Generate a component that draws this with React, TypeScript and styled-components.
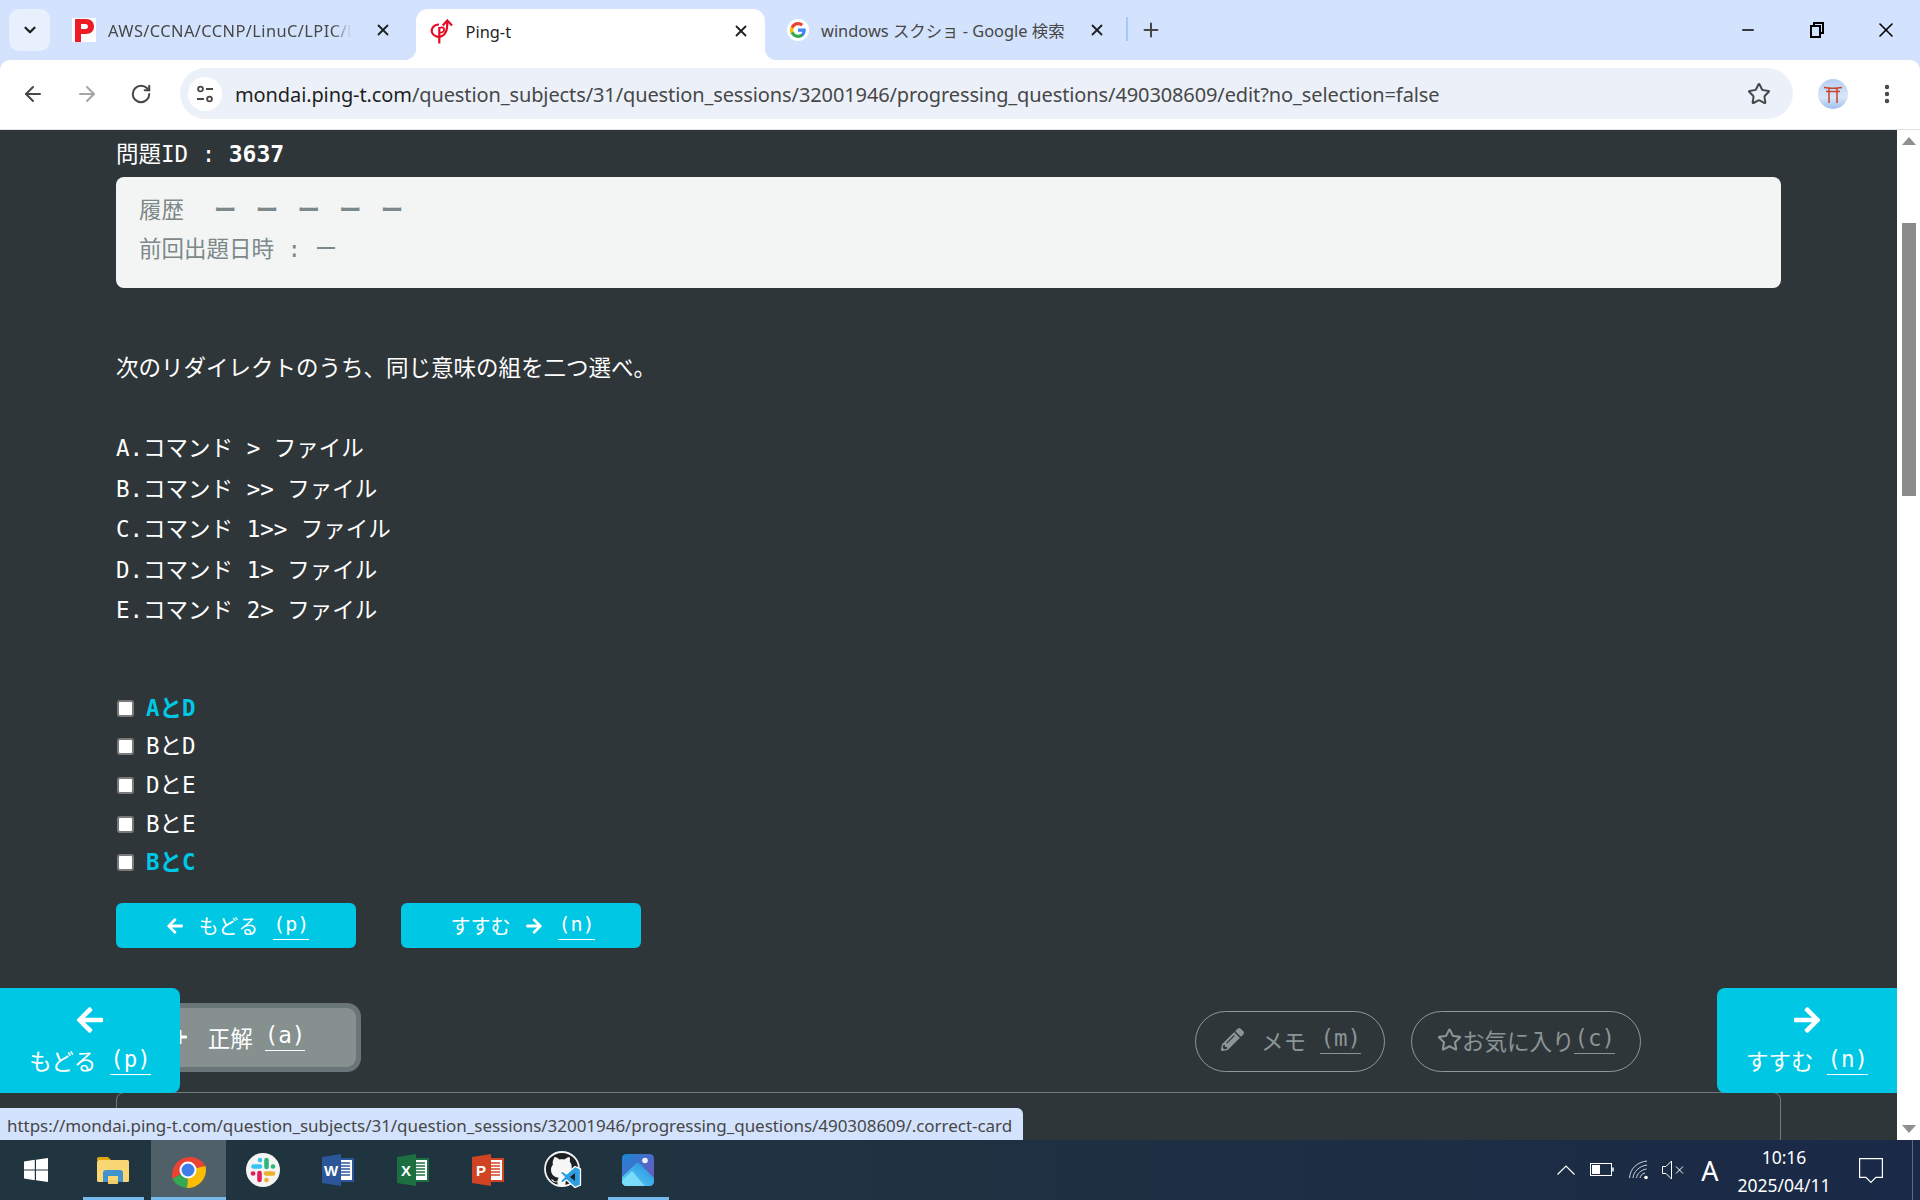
import React from "react";
import styled, { createGlobalStyle } from "styled-components";
import { ArrowLeft, ArrowRight, RotateCw, Star, EllipsisVertical, X, Plus, ChevronDown, Minus } from "lucide-react";
import { FaArrowLeft, FaArrowRight, FaPencilAlt, FaRegStar, FaPlus } from "react-icons/fa";

const CODE = `"DejaVu Sans Mono", "Noto Sans CJK JP", monospace`;
const UI = `"Noto Sans", "Noto Sans CJK JP", sans-serif`;
const CYAN = "#00c7e3";
const BG = "#2f3639";

const Global = createGlobalStyle`
  html, body { margin: 0; padding: 0; width: 100%; height: 100%; overflow: hidden; background: ${BG}; }
  * { box-sizing: border-box; }
`;

const Screen = styled.div`
  width: 1920px; height: 1200px; display: flex; flex-direction: column; overflow: hidden;
  font-family: ${UI};
`;

/* ---------- tab strip ---------- */
const TabStrip = styled.div`
  height: 60px; flex: none; background: #d3e3fd; display: flex; align-items: flex-end; padding-left: 9px; gap: 8px;
`;
const TabSearch = styled.div`
  width: 41px; height: 42px; margin-bottom: 9px; border-radius: 10px; background: #e9f0fd;
  display: flex; align-items: center; justify-content: center; color: #1f1f1f;
`;
const Tab = styled.div<{ $active?: boolean; $end: number }>`
  width: 349.5px; height: 51px; position: relative; display: flex; align-items: center; gap: 12px;
  padding: 0 ${(p) => p.$end}px 9px 14px; border-radius: 12px 12px 0 0; color: ${(p) => (p.$active ? "#1f1f1f" : "#474747")};
  background: ${(p) => (p.$active ? "#fff" : "transparent")};
  ${(p) =>
    p.$active &&
    `padding-bottom: 7px;
    &::before, &::after { content: ""; position: absolute; bottom: 0; width: 12px; height: 12px; }
    &::before { left: -12px; background: radial-gradient(circle at 0 0, transparent 12px, #fff 12.5px); }
    &::after { right: -12px; background: radial-gradient(circle at 100% 0, transparent 12px, #fff 12.5px); }`}
`;
const TabTitle = styled.span<{ $fade?: boolean }>`
  flex: 1; min-width: 0; font-size: 16.4px; white-space: nowrap;
  ${(p) => p.$fade && `letter-spacing: 0.42px; -webkit-mask-image: linear-gradient(90deg, #000 88%, transparent 96%); mask-image: linear-gradient(90deg, #000 88%, transparent 96%);`}
`;
const TabClose = styled.span`
  width: 18px; height: 18px; flex: none; display: flex; align-items: center; justify-content: center; color: #1f1f1f;
`;
const TabSeparator = styled.div`
  width: 2px; height: 24px; background: #a8c7fa; margin: 0 0 19px -5px; flex: none;
`;
const NewTab = styled.div`
  width: 24px; height: 24px; margin: 0 0 18px 3px; display: flex; align-items: center; justify-content: center; color: #444746;
`;
const WindowControls = styled.div`
  margin-left: auto; display: flex; align-self: stretch;
`;
const WindowButton = styled.div`
  width: 69px; height: 60px; display: flex; align-items: center; justify-content: center; color: #000;
`;

/* ---------- toolbar ---------- */
const Toolbar = styled.div`
  height: 70px; flex: none; position: relative; background: #d3e3fd;
`;
const ToolbarInner = styled.div`
  height: 100%; background: #fff; border-radius: 10px 10px 0 0; border-bottom: 1px solid #dfe1e4;
  display: flex; align-items: center; padding: 0 0 2px 15px;
`;
const NavButton = styled.div<{ $dim?: boolean }>`
  width: 36px; height: 36px; margin-right: 18px; display: flex; align-items: center; justify-content: center;
  color: ${(p) => (p.$dim ? "#a3a5a8" : "#474747")};
`;
const Omnibox = styled.div`
  width: 1613px; height: 51px; margin-left: 3px; background: #ecf1f9; border-radius: 26px; display: flex; align-items: center; padding: 0 22px 0 8px;
`;
const SiteInfo = styled.div`
  width: 34px; height: 34px; border-radius: 50%; background: #fff; display: flex; align-items: center; justify-content: center; flex: none;
`;
const Url = styled.div`
  margin-left: 13px; padding-top: 1px; flex: 1; font-size: 20px; letter-spacing: -0.11px; color: #474747; white-space: nowrap;
`;
const UrlHost = styled.span`
  color: #1f1f1f;
`;
const OmniStar = styled.div`
  width: 24px; height: 24px; display: flex; align-items: center; justify-content: center; color: #474747;
`;
const Avatar = styled.div`
  width: 30px; height: 30px; margin-left: 25px; border-radius: 50%; background: linear-gradient(#b6cff2, #d9e6f8 60%, #9dbdec);
  display: flex; align-items: center; justify-content: center; flex: none;
`;
const Menu = styled.div`
  width: 24px; height: 24px; margin-left: 27px; color: #474747; display: flex; align-items: center; justify-content: center;
`;

/* ---------- page ---------- */
const Middle = styled.div`
  flex: 1; min-height: 0; display: flex;
`;
const Page = styled.main`
  flex: 1; min-width: 0; position: relative; overflow: hidden; background: ${BG};
  padding: 0 116px 0 116px; font-family: ${CODE}; font-size: 22.5px; color: #fff;
`;
const QuestionId = styled.div`
  height: 46px; line-height: 48px; margin-bottom: 1px; white-space: pre;
`;
const Strong = styled.strong`
  font-size: 23px; font-weight: 700;
`;
const History = styled.section`
  height: 111px; background: #f3f5f5; border-radius: 8px; padding: 13.5px 23px 0; color: #7c8889;
`;
const HistoryLine = styled.div`
  line-height: 39px; white-space: pre;
`;
const HistoryDashes = styled.span`
  margin-left: 30px; letter-spacing: 19.2px; font-weight: 700;
`;
const QuestionText = styled.p`
  margin: 60px 0 40px; line-height: 40px;
`;
const Options = styled.div`
  margin-bottom: 57px;
`;
const OptionLine = styled.div`
  line-height: 40.5px; white-space: pre;
`;
const Choices = styled.div`
  display: flex; flex-direction: column;
`;
const ChoiceRow = styled.label<{ $hit?: boolean }>`
  height: 38.6px; padding-bottom: 2px; display: flex; align-items: center; gap: 12px; white-space: pre;
  color: ${(p) => (p.$hit ? CYAN : "#fff")}; font-weight: ${(p) => (p.$hit ? 700 : 400)};
`;
const Check = styled.input`
  appearance: none; width: 17px; height: 17px; margin: 5px 0 0 1px; flex: none; background: #fff; border: 2px solid #7a7a7a; border-radius: 3px;
`;
const InlineButtons = styled.div`
  display: flex; gap: 45px; margin-top: 23px;
`;
const CyanButton = styled.button`
  width: 240px; height: 45px; padding: 0 0 0 3px; border: 0; border-radius: 6px; background: ${CYAN}; color: #fff;
  font: 400 20px ${CODE}; display: flex; align-items: center; justify-content: center; gap: 15px;
`;
const Key = styled.span<{ $pull?: number }>`
  border-bottom: 1px solid currentColor; line-height: 27px; padding: 0 0 1px; white-space: pre;
  margin-left: ${(p) => p.$pull ?? 0}px;
`;
const ActionRow = styled.div`
  display: flex; align-items: flex-end; margin-top: 54px; height: 70px;
`;
const AnswerButton = styled.button`
  width: 245px; height: 69px; padding: 0 0 2px; border: 5px solid #6a7577; border-radius: 14px; background: #85908f; color: #fff;
  font: 400 22.5px ${CODE}; display: flex; align-items: center; justify-content: center; gap: 20px;
`;
const PillGroup = styled.div`
  margin-left: auto; margin-right: 140px; display: flex; gap: 26px;
`;
const Pill = styled.button<{ $w: number; $gap: number; $lead?: number }>`
  width: ${(p) => p.$w}px; height: 61px; padding: 0 0 4px ${(p) => p.$lead ?? 0}px; border: 1px solid #8e9899; border-radius: 31px; background: transparent;
  color: #8a9596; font: 400 22.5px ${CODE}; display: flex; align-items: center; justify-content: center; gap: ${(p) => p.$gap}px;
`;
const ExplainCard = styled.section`
  margin-top: 20px; height: 100px; border: 1px solid #73797b; border-radius: 8px;
`;
const FloatButton = styled.button<{ $side: "left" | "right" }>`
  position: absolute; bottom: 47px; ${(p) => p.$side}: 0; width: 180px; height: 105px; padding: 0; border: 0; background: ${CYAN}; color: #fff;
  border-radius: ${(p) => (p.$side === "left" ? "0 8px 8px 0" : "8px 0 0 8px")};
  font: 400 22.5px ${CODE}; display: flex; flex-direction: column; align-items: center; gap: 9px; padding-top: 17px;
`;
const FloatLabel = styled.span`
  display: flex; align-items: center; gap: 14px;
`;
const StatusBubble = styled.div`
  position: absolute; left: 0; bottom: 0; width: 1023px; height: 32px; background: #d3e3fd; border-radius: 0 6px 0 0;
  padding-left: 7px; font: 400 17px/36px ${UI}; letter-spacing: -0.04px; color: #474747; white-space: nowrap; overflow: hidden;
`;
const Scrollbar = styled.div`
  width: 23px; flex: none; background: #fff; display: flex; flex-direction: column; align-items: center; position: relative; padding-left: 1px;
`;
const ScrollArrow = styled.div<{ $down?: boolean }>`
  width: 0; height: 0; border-left: 7.5px solid transparent; border-right: 7.5px solid transparent; margin: ${(p) => (p.$down ? "auto 0 7px" : "7px 0 0")};
  ${(p) => (p.$down ? "border-top: 8px solid #8f8f8f;" : "border-bottom: 8px solid #8f8f8f;")}
`;
const ScrollThumb = styled.div`
  position: absolute; top: 93px; left: 5px; width: 14px; height: 273px; background: #8b8b8b;
`;

/* ---------- taskbar ---------- */
const Taskbar = styled.footer`
  height: 60px; flex: none; display: flex; align-items: center; background: linear-gradient(90deg, #20353f, #1f3340 40%, #1a2947);
  color: #fff; position: relative;
`;
const TaskStart = styled.div`
  width: 75.5px; height: 100%; display: flex; align-items: center; justify-content: center; padding-right: 3px;
`;
const TaskCell = styled.div<{ $open?: boolean; $active?: boolean }>`
  width: 75px; height: 100%; position: relative; display: flex; align-items: center; justify-content: center;
  background: ${(p) => (p.$active ? "#4f6068" : "transparent")};
  ${(p) =>
    p.$open &&
    `&::after { content: ""; position: absolute; bottom: 0; left: ${p.$active ? 0 : 7}px; right: ${p.$active ? 0 : 7}px; height: 3px; background: #76b9ed; }`}
`;
const Tray = styled.div`
  margin-left: auto; height: 100%; display: flex; align-items: center;
`;
const TrayIcon = styled.div<{ $w: number; $ml: number }>`
  width: ${(p) => p.$w}px; margin-left: ${(p) => p.$ml}px; display: flex; align-items: center; justify-content: center; flex: none;
`;
const ImeLetter = styled.div`
  width: 20px; margin-left: 16px; font: 400 27px/1 ${UI}; text-align: center;
`;
const Clock = styled.div`
  width: 100px; margin-left: 14px; text-align: center; font: 400 17.5px/28px ${UI}; padding-top: 1px;
`;
const Notify = styled.div`
  margin: 2px 37px 0 25px; width: 24px; display: flex;
`;
const DesktopEdge = styled.div`
  position: absolute; right: 7px; top: 0; bottom: 0; width: 1px; background: #5d6a80;
`;

/* ---------- drawings ---------- */
const PFavicon = () => (
  <svg width="24" height="24" viewBox="0 0 24 24">
    <rect width="24" height="24" fill="#fff" />
    <path d="M3 1h11c5 0 8 3 8 7.500S19 16 14 16H9v8H3z M9 6v5h4.500c1.600 0 2.500-1 2.500-2.500S15 6 13.500 6z" fill="#ee1c25" fillRule="evenodd" />
  </svg>
);
const PingFavicon = () => (
  <svg width="24" height="25" viewBox="0 0 24 25" fill="none" stroke="#e60b24" strokeWidth="2.2">
    <path d="M9 5.500C3.500 5.500 1 10 2 13.500c1 3.500 6 5.500 10 3.500 4-2 5.700-5.500 5.200-14" />
    <path d="M9.300 8v16.500" />
    <path d="M9.300 9c3-1.500 5.200-.3 4.800 2s-2.800 3-4.800 2.500" strokeWidth="1.800" />
    <path d="M12.800 6.500L17.300 1.500 22 6.500" />
  </svg>
);
const GFavicon = () => (
  <svg width="22" height="22" viewBox="0 0 24 24">
    <circle cx="12" cy="12" r="12" fill="#fff" />
    <g transform="translate(2.400 2.400) scale(.8)">
      <path fill="#4285f4" d="M22.560 12.250c0-.78-.07-1.530-.2-2.250H12v4.260h5.920c-.26 1.370-1.040 2.530-2.210 3.310v2.770h3.570c2.080-1.920 3.280-4.740 3.280-8.090z" />
      <path fill="#34a853" d="M12 23c2.970 0 5.460-.98 7.280-2.660l-3.570-2.770c-.98.66-2.230 1.060-3.710 1.060-2.860 0-5.290-1.930-6.160-4.530H2.180v2.840C3.990 20.530 7.700 23 12 23z" />
      <path fill="#fbbc05" d="M5.840 14.090c-.22-.66-.35-1.360-.35-2.090s.13-1.430.35-2.090V7.070H2.180C1.430 8.550 1 10.220 1 12s.43 3.450 1.180 4.930l2.850-2.220.81-.62z" />
      <path fill="#ea4335" d="M12 5.380c1.620 0 3.060.56 4.210 1.640l3.150-3.150C17.450 2.090 14.970 1 12 1 7.700 1 3.990 3.470 2.180 7.070l3.660 2.840c.87-2.600 3.300-4.530 6.160-4.530z" />
    </g>
  </svg>
);
const RestoreIcon = () => (
  <svg width="16" height="16" viewBox="0 0 16 16" fill="none" stroke="#000" strokeWidth="2">
    <rect x="2" y="4" width="9" height="11" />
    <path d="M5 4V1h9v10h-3" />
  </svg>
);
const TuneIcon = () => (
  <svg width="20" height="20" viewBox="0 0 20 20" fill="none" stroke="#474747" strokeWidth="1.800">
    <circle cx="5.500" cy="5" r="2.400" />
    <path d="M11 5h7M2 15h7" />
    <circle cx="14.500" cy="15" r="2.400" />
  </svg>
);
const Torii = () => (
  <svg width="20" height="20" viewBox="0 0 20 20" fill="none" stroke="#c8442c" strokeWidth="1.500">
    <path d="M1 3.500c6 1 12 1 18 0M3 7.500h14M6 3.500V19M14 3.500V19" />
  </svg>
);
const WindowsLogo = () => (
  <svg width="24" height="24" viewBox="0 0 24 24" fill="#fff">
    <path d="M0 3.400 10.800 1.800v9.600H0zM12 1.700 24 0v11.400H12zM0 12.600h10.800v9.600L0 20.600zM12 12.600h12V24l-12-1.700z" />
  </svg>
);
const ExplorerIcon = () => (
  <svg width="32" height="27" viewBox="0 0 32 27">
    <path d="M0 2a2 2 0 0 1 2-2h9l3 3H0z" fill="#e0a50f" />
    <rect y="3" width="32" height="22" rx="1.500" fill="#f9d775" />
    <path d="M6 25v-9a3 3 0 0 1 3-3h14a3 3 0 0 1 3 3v9h-5v-6H11v6z" fill="#3f94d0" />
    <rect x="11" y="23" width="10" height="4" fill="#f0cc6a" />
  </svg>
);
const ChromeIcon = () => (
  <svg width="36" height="36" viewBox="0 0 36 36">
    <path d="M18 18L2.400 27A18 18 0 0 1 35.500 14z" fill="#ea4335" />
    <path d="M18 18L35.500 14A18 18 0 0 1 17 36z" fill="#fbbc04" />
    <path d="M18 18L17 36A18 18 0 0 1 2.400 27z" fill="#34a853" />
    <circle cx="18" cy="18" r="8.500" fill="#fff" />
    <circle cx="18" cy="18" r="6.500" fill="#3f7ee8" />
  </svg>
);
const SlackIcon = () => (
  <svg width="34" height="34" viewBox="0 0 34 34">
    <circle cx="17" cy="17" r="17" fill="#f4f4f4" />
    <g strokeWidth="4.600" strokeLinecap="round">
      <path d="M7.500 13.500h6.500M14 7v.1" stroke="#36c5f0" />
      <path d="M20.500 7v7M27 13.500h.1" stroke="#2eb67d" />
      <path d="M27 20.500h-7M20.500 27v.1" stroke="#ecb22e" />
      <path d="M13.500 27v-7M7 20.500h.1" stroke="#e01e5a" />
    </g>
  </svg>
);
const OfficeIcon = ({ letter, dark, page }: { letter: string; dark: string; page: string }) => (
  <svg width="32" height="32" viewBox="0 0 32 32">
    <rect x="15" y="4" width="17" height="24" fill={page} />
    <rect x="17" y="6" width="13" height="20" fill="#fff" />
    <path d="M18 9h10M18 12h10M18 15h10M18 18h10M18 21h10" stroke={page} strokeWidth="1.500" />
    <path d="M0 3L19 0v32L0 29z" fill={dark} />
    <text x="9" y="22" textAnchor="middle" fontFamily="Liberation Sans" fontWeight="700" fontSize="15" fill="#fff">{letter}</text>
  </svg>
);
const GithubVs = () => (
  <svg width="38" height="38" viewBox="0 0 38 38">
    <circle cx="18" cy="18" r="17" fill="#1a2024" stroke="#f4f4f4" strokeWidth="1.800" />
    <path d="M10.500 6c2 0 4 1.500 5 2.500 1.600-.3 3.400-.3 5 0 1-1 3-2.500 5-2.500.6 1.500.7 3 .2 4.500 1.300 1.500 2 3.300 2 5.300 0 5-3 7.500-7.500 8 .8.7 1.300 2 1.300 3.500v7.200h-8V31c-3 .6-5 0-6.500-3 .9.1 2 .6 3 2 1 .6 2.300.8 3.500.3.100-1.500.5-2.800 1.300-3.500-4.500-.5-7.800-3-7.800-8 0-2 .7-3.800 2-5.300-.5-1.500-.4-3 .2-4.500z" fill="#f7f7f7" />
    <path d="M31 15.500l-8.500 7.500-4-3-2.500 1.800 4.200 4.200-4.200 4.200 2.500 1.800 4-3 8.500 7.500 5.500-2.500V18z" fill="#2f9fe4" stroke="#fff" strokeWidth="1.300" />
    <path d="M31 22l-5 4 5 4z" fill="#1a2024" />
  </svg>
);
const PhotosIcon = () => (
  <svg width="32" height="32" viewBox="0 0 32 32">
    <defs>
      <linearGradient id="ph" x1="0" y1="0" x2="1" y2="1"><stop offset="0" stopColor="#1a87d8" /><stop offset="1" stopColor="#7c4fb8" /></linearGradient>
      <linearGradient id="mt" x1="0" y1="1" x2="1" y2="0"><stop offset="0" stopColor="#62d2f7" /><stop offset="1" stopColor="#1f8fdc" /></linearGradient>
    </defs>
    <rect width="32" height="32" rx="4.500" fill="url(#ph)" />
    <circle cx="23" cy="6.500" r="2.800" fill="#f4eef6" />
    <path d="M0 23L14 9.500c1.300-1 2.300-1 3.500 0L32 24v3.500a4.500 4.500 0 0 1-4.500 4.500h-23A4.500 4.500 0 0 1 0 27.500z" fill="url(#mt)" />
    <path d="M0 27L10 17l13 15H4.500A4.500 4.500 0 0 1 0 27.500z" fill="#7adcfa" />
  </svg>
);
const TrayChevron = () => (
  <svg width="18" height="10" viewBox="0 0 18 10" fill="none" stroke="#fff" strokeWidth="1.200">
    <path d="M.500 9.500L9 1l8.500 8.500" />
  </svg>
);
const BatteryIcon = () => (
  <svg width="24" height="14" viewBox="0 0 24 14" fill="none" stroke="#fff" strokeWidth="1">
    <rect x=".5" y=".5" width="21" height="12" />
    <rect x="2" y="2" width="8" height="9" fill="#fff" stroke="none" />
    <path d="M23 4.500v4" strokeWidth="1.500" />
  </svg>
);
const WifiIcon = () => (
  <svg width="20" height="20" viewBox="0 0 20 20" fill="none" stroke="#cfd3da" strokeWidth="1">
    <path d="M.500 18C1 9 8 2 18 1M4 18c.5-6 6-12 14-13M7.500 18c.5-4 4-8 10-9M11 18c.3-2 2-4.500 5-5" />
    <circle cx="17" cy="17.500" r="1.800" fill="#fff" stroke="none" />
  </svg>
);
const SpeakerIcon = () => (
  <svg width="22" height="20" viewBox="0 0 22 20" fill="none" stroke="#fff" strokeWidth="1">
    <path d="M.500 6.500h3.500L9.500 1v18L4 13.500H.500z" />
    <path d="M14 6.500l7 7M21 6.500l-7 7" />
  </svg>
);
const NotifyIcon = () => (
  <svg width="24" height="26" viewBox="0 0 24 26" fill="none" stroke="#fff" strokeWidth="1.200">
    <path d="M.600.600h22.800v18.800h-6.500l-5 5-5-5H.600z" />
  </svg>
);

const options = ["A.コマンド > ファイル", "B.コマンド >> ファイル", "C.コマンド 1>> ファイル", "D.コマンド 1> ファイル", "E.コマンド 2> ファイル"];
const choices = [
  { t: "AとD", hit: true },
  { t: "BとD" },
  { t: "DとE" },
  { t: "BとE" },
  { t: "BとC", hit: true },
];
const noop = () => undefined;

export default function App() {
  return (
    <Screen>
      <Global />
      <TabStrip>
        <TabSearch><ChevronDown size={18} strokeWidth={3} /></TabSearch>
        <Tab $end={16}>
          <PFavicon />
          <TabTitle $fade>AWS/CCNA/CCNP/LinuC/LPIC/L</TabTitle>
          <TabClose><X size={18} strokeWidth={2.4} /></TabClose>
        </Tab>
        <Tab $active $end={15}>
          <PingFavicon />
          <TabTitle>Ping-t</TabTitle>
          <TabClose><X size={18} strokeWidth={2.4} /></TabClose>
        </Tab>
        <Tab $end={17}>
          <GFavicon />
          <TabTitle>windows スクショ - Google 検索</TabTitle>
          <TabClose><X size={18} strokeWidth={2.4} /></TabClose>
        </Tab>
        <TabSeparator />
        <NewTab><Plus size={22} strokeWidth={2.2} /></NewTab>
        <WindowControls>
          <WindowButton><Minus size={18} strokeWidth={2} /></WindowButton>
          <WindowButton><RestoreIcon /></WindowButton>
          <WindowButton><X size={24} strokeWidth={1.6} /></WindowButton>
        </WindowControls>
      </TabStrip>
      <Toolbar>
        <ToolbarInner>
          <NavButton><ArrowLeft size={24} strokeWidth={2} /></NavButton>
          <NavButton $dim><ArrowRight size={24} strokeWidth={2} /></NavButton>
          <NavButton><RotateCw size={22} strokeWidth={2.2} /></NavButton>
          <Omnibox>
            <SiteInfo><TuneIcon /></SiteInfo>
            <Url><UrlHost>mondai.ping-t.com</UrlHost>/question_subjects/31/question_sessions/32001946/progressing_questions/490308609/edit?no_selection=false</Url>
            <OmniStar><Star size={24} strokeWidth={2} /></OmniStar>
          </Omnibox>
          <Avatar><Torii /></Avatar>
          <Menu><EllipsisVertical size={24} strokeWidth={2.4} /></Menu>
        </ToolbarInner>
      </Toolbar>
      <Middle>
        <Page>
          <QuestionId>問題ID : <Strong>3637</Strong></QuestionId>
          <History>
            <HistoryLine>履歴<HistoryDashes>ーーーーー</HistoryDashes></HistoryLine>
            <HistoryLine>前回出題日時 : ー</HistoryLine>
          </History>
          <QuestionText>次のリダイレクトのうち、同じ意味の組を二つ選べ。</QuestionText>
          <Options>
            {options.map((o) => <OptionLine key={o}>{o}</OptionLine>)}
          </Options>
          <Choices>
            {choices.map((c) => (
              <ChoiceRow key={c.t} $hit={c.hit}><Check type="checkbox" checked={false} onChange={noop} />{c.t}</ChoiceRow>
            ))}
          </Choices>
          <InlineButtons>
            <CyanButton><FaArrowLeft size={18} />もどる <Key>(p)</Key></CyanButton>
            <CyanButton>すすむ <FaArrowRight size={18} /><Key>(n)</Key></CyanButton>
          </InlineButtons>
          <ActionRow>
            <AnswerButton><FaPlus size={16} />正解 <Key $pull={-8}>(a)</Key></AnswerButton>
            <PillGroup>
              <Pill $w={190} $gap={17} $lead={2}><FaPencilAlt size={23} />メモ <Key $pull={-2.5}>(m)</Key></Pill>
              <Pill $w={230} $gap={0}><FaRegStar size={25} />お気に入り<Key>(c)</Key></Pill>
            </PillGroup>
          </ActionRow>
          <ExplainCard />
          <FloatButton $side="left">
            <FaArrowLeft size={30} />
            <FloatLabel>もどる <Key>(p)</Key></FloatLabel>
          </FloatButton>
          <FloatButton $side="right">
            <FaArrowRight size={30} />
            <FloatLabel>すすむ <Key>(n)</Key></FloatLabel>
          </FloatButton>
          <StatusBubble>https://mondai.ping-t.com/question_subjects/31/question_sessions/32001946/progressing_questions/490308609/.correct-card</StatusBubble>
        </Page>
        <Scrollbar>
          <ScrollArrow />
          <ScrollThumb />
          <ScrollArrow $down />
        </Scrollbar>
      </Middle>
      <Taskbar>
        <TaskStart><WindowsLogo /></TaskStart>
        <TaskCell $open><ExplorerIcon /></TaskCell>
        <TaskCell $open $active><ChromeIcon /></TaskCell>
        <TaskCell><SlackIcon /></TaskCell>
        <TaskCell><OfficeIcon letter="W" dark="#2b579a" page="#2b579a" /></TaskCell>
        <TaskCell><OfficeIcon letter="X" dark="#1d6f42" page="#1d6f42" /></TaskCell>
        <TaskCell><OfficeIcon letter="P" dark="#d04423" page="#d04423" /></TaskCell>
        <TaskCell><GithubVs /></TaskCell>
        <TaskCell $open><PhotosIcon /></TaskCell>
        <Tray>
          <TrayIcon $w={20} $ml={0}><TrayChevron /></TrayIcon>
          <TrayIcon $w={24} $ml={14}><BatteryIcon /></TrayIcon>
          <TrayIcon $w={20} $ml={15}><WifiIcon /></TrayIcon>
          <TrayIcon $w={22} $ml={13}><SpeakerIcon /></TrayIcon>
          <ImeLetter>A</ImeLetter>
          <Clock>10:16<br />2025/04/11</Clock>
          <Notify><NotifyIcon /></Notify>
        </Tray>
        <DesktopEdge />
      </Taskbar>
    </Screen>
  );
}
